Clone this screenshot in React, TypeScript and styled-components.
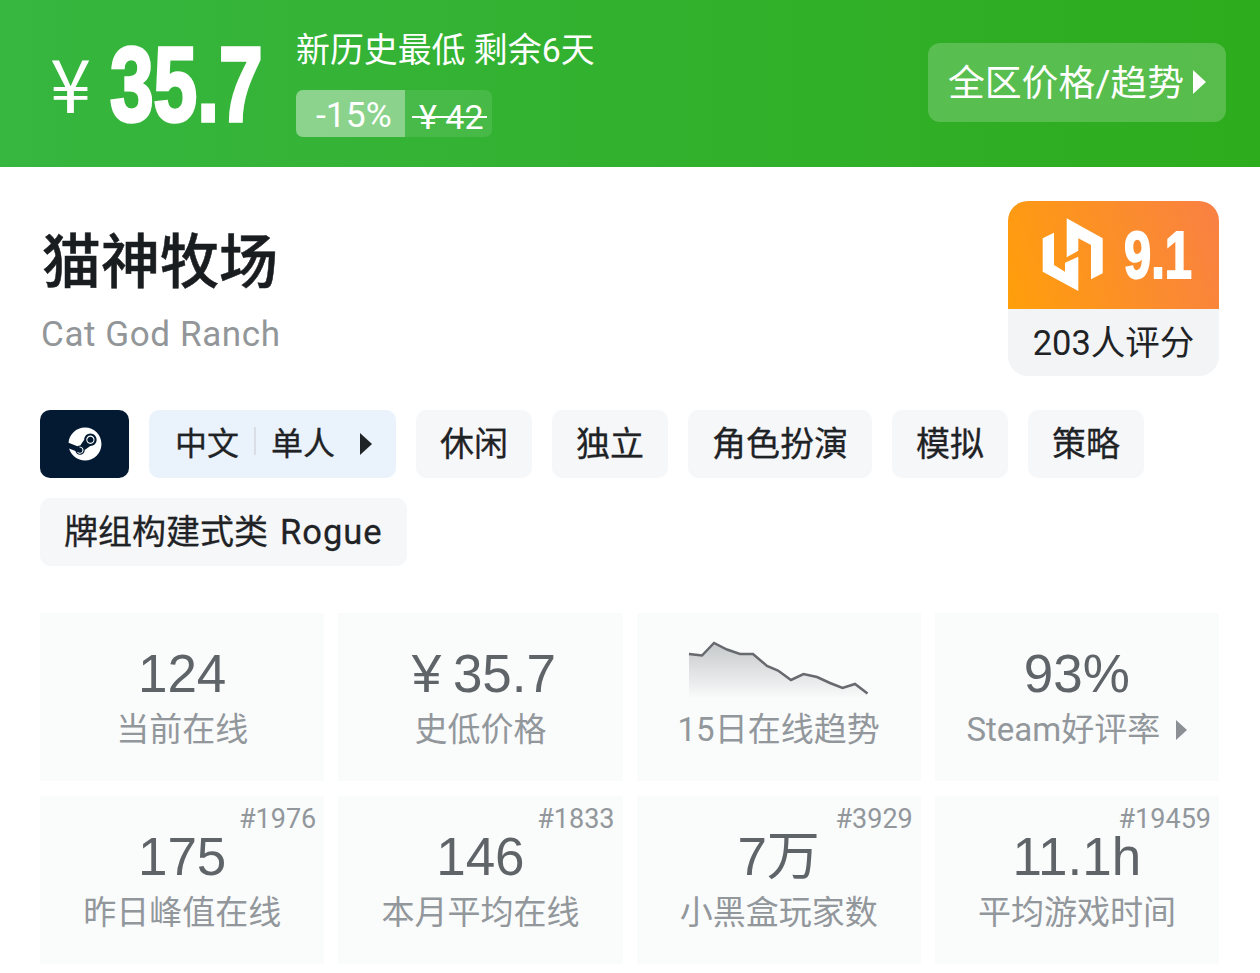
import * as React from 'react';
import styled, { createGlobalStyle } from 'styled-components';
import { FaSteam } from 'react-icons/fa';

const GlobalStyle = createGlobalStyle`
  html, body {
    margin: 0;
    padding: 0;
    background: #fff;
    overflow: hidden;
  }
  * {
    box-sizing: border-box;
  }
`;

const sans = `Roboto, "Noto Sans CJK SC", sans-serif`;

const Page = styled.div`
  width: 1260px;
  height: 973px;
  font-family: ${sans};
  overflow: hidden;
`;

const PriceBar = styled.div`
  height: 167px;
  display: flex;
  align-items: center;
  padding: 0 34px 0 50px;
  background: linear-gradient(90deg, #37b640, #2dac1d);
  color: #fff;
`;

const Yen = styled.span`
  font-size: 74px;
  line-height: 1;
  font-family: "Noto Sans CJK SC", sans-serif;
  width: 60px;
  padding-bottom: 6px;
`;

const PriceValue = styled.span`
  display: block;
  width: 186px;
  font-family: "Liberation Sans", sans-serif;
  font-weight: 700;
  font-size: 106px;
  line-height: 1;
  -webkit-text-stroke: 3.5px #fff;
  transform: scaleX(0.74);
  transform-origin: left center;
  white-space: nowrap;
`;

const PriceInfo = styled.div`
  display: flex;
  flex-direction: column;
  gap: 19px;
  flex: 1;
`;

const PriceNote = styled.div`
  font-size: 33.9px;
  line-height: 40px;
`;

const Discount = styled.div`
  display: flex;
  width: 196px;
  height: 47px;
  border-radius: 7px;
  overflow: hidden;
  background: rgba(255, 255, 255, 0.1);
`;

const DiscountRate = styled.span`
  width: 109px;
  padding-left: 20px;
  font-size: 35.5px;
  line-height: 50px;
  background: rgba(255, 255, 255, 0.37);
`;

const OldPrice = styled.span`
  padding-left: 14px;
  font-size: 34px;
  line-height: 54px;
  position: relative;
  &::after {
    content: '';
    position: absolute;
    left: 7px;
    right: -3px;
    top: 26px;
    height: 2px;
    background: #fff;
  }
`;

const RegionButton = styled.div`
  width: 298px;
  height: 79px;
  margin-bottom: 2px;
  border-radius: 12px;
  background: rgba(255, 255, 255, 0.2);
  display: flex;
  align-items: center;
  padding: 0 0 6px 20px;
  gap: 9px;
  font-size: 36.8px;
`;

const Arrow = styled.i<{ $w: number; $h: number; $color: string; $gap?: number; $drop?: number }>`
  display: block;
  flex: none;
  width: 0;
  height: 0;
  margin-left: ${(p) => p.$gap || 0}px;
  margin-top: ${(p) => p.$drop || 0}px;
  border-style: solid;
  border-width: ${(p) => p.$h / 2}px 0 ${(p) => p.$h / 2}px ${(p) => p.$w}px;
  border-color: transparent transparent transparent ${(p) => p.$color};
`;

const Main = styled.div`
  padding: 34px 41px 0 40px;
`;

const TitleRow = styled.div`
  display: flex;
  justify-content: space-between;
`;

const TitleBlock = styled.div`
  padding: 27px 0 0 2px;
`;

const Title = styled.h1`
  margin: 0;
  font-size: 59px;
  line-height: 70px;
  font-weight: 500;
  -webkit-text-stroke: 0.5px #1a1d20;
  color: #1a1d20;
`;

const Subtitle = styled.div`
  margin: 16px 0 0 -1px;
  font-size: 35px;
  line-height: 42px;
  letter-spacing: 0.6px;
  color: #929699;
`;

const ScoreCard = styled.div`
  width: 211px;
  height: 175px;
  border-radius: 20px;
  overflow: hidden;
  background: #f3f4f6;
`;

const ScoreTop = styled.div`
  height: 108px;
  display: flex;
  align-items: center;
  padding-left: 34px;
  gap: 20px;
  background: linear-gradient(70deg, #ff9f0a, #f98044);
  color: #fff;
`;

const ScoreValue = styled.span`
  display: block;
  width: 66px;
  font-family: "Liberation Sans", sans-serif;
  font-weight: 700;
  font-size: 66px;
  line-height: 1;
  -webkit-text-stroke: 2px #fff;
  transform: scaleX(0.74);
  transform-origin: left center;
  white-space: nowrap;
`;

const ScoreCount = styled.div`
  text-align: center;
  font-size: 34.5px;
  line-height: 69px;
  color: #1f2326;
`;

const TagList = styled.div`
  display: flex;
  flex-wrap: wrap;
  gap: 20px;
  margin-top: 34px;
`;

const Tag = styled.div`
  height: 68px;
  padding: 0 24px 6px;
  display: flex;
  align-items: center;
  border-radius: 10px;
  background: #f6f7f9;
  font-size: 34px;
  -webkit-text-stroke: 0.3px #1f2326;
  color: #1f2326;
  white-space: pre;
`;

const SteamTag = styled(Tag)`
  width: 89px;
  padding: 0;
  justify-content: center;
  background: #041a33;
  color: #fff;
  -webkit-text-stroke: 0;
`;

const LangTag = styled(Tag)`
  width: 247px;
  padding: 0 0 6px 26px;
  font-size: 32px;
  background: #eaf3fc;
`;

const Divider = styled.span`
  width: 2px;
  height: 28px;
  margin: 0 15px;
  background: #d9dfe5;
`;

const LatinWord = styled.span`
  margin: 5px 0 0 12px;
  font-size: 34.5px;
  letter-spacing: 1px;
`;

const StatGrid = styled.div`
  display: grid;
  grid-template-columns: repeat(4, 1fr);
  grid-auto-rows: 168px;
  gap: 15px 14px;
  margin-top: 47px;
`;

const StatCard = styled.div`
  position: relative;
  display: flex;
  flex-direction: column;
  align-items: center;
  padding-top: 30px;
  background: #fafbfb;
`;

const StatValue = styled.div<{ $nudge?: number }>`
  padding-left: ${(p) => p.$nudge || 0}px;
  font-family: "Liberation Sans", "Noto Sans CJK SC", sans-serif;
  font-size: 53px;
  line-height: 62px;
  word-spacing: -3px;
  color: #5f6469;
`;

const StatLabel = styled.div`
  display: flex;
  align-items: center;
  margin-top: 2px;
  font-size: 33px;
  line-height: 46px;
  color: #92979c;
`;

const Rank = styled.span`
  position: absolute;
  top: 5px;
  right: 8px;
  font-size: 27px;
  line-height: 36px;
  color: #92979c;
`;

const TrendChart = styled.svg`
  display: block;
  margin: -2px 0 6px;
`;

const trend = '1,13 14,14.5 26,2 39,8.5 52,13 65,13 79,25 90,29.5 103,39 115.5,33 129,36 142,42 154.5,47 167,43 179.5,52.5';

const stats = [
  { value: '175', label: '昨日峰值在线', rank: '#1976' },
  { value: '146', label: '本月平均在线', rank: '#1833' },
  { value: '7万', label: '小黑盒玩家数', rank: '#3929' },
  { value: '11.1h', label: '平均游戏时间', rank: '#19459' },
];

const tags = ['休闲', '独立', '角色扮演', '模拟', '策略'];

export default function App() {
  return (
    <Page>
      <GlobalStyle />
      <PriceBar>
        <Yen>¥</Yen>
        <PriceValue>35.7</PriceValue>
        <PriceInfo>
          <PriceNote>新历史最低 剩余6天</PriceNote>
          <Discount>
            <DiscountRate>-15%</DiscountRate>
            <OldPrice>¥ 42</OldPrice>
          </Discount>
        </PriceInfo>
        <RegionButton>
          全区价格/趋势
          <Arrow $w={13} $h={25} $color="#fff" $drop={4} />
        </RegionButton>
      </PriceBar>
      <Main>
        <TitleRow>
          <TitleBlock>
            <Title>猫神牧场</Title>
            <Subtitle>Cat God Ranch</Subtitle>
          </TitleBlock>
          <ScoreCard>
            <ScoreTop>
              <svg width="62" height="76" viewBox="0 0 62 76">
                <path fill="#fff" d="M24.7 1.3 L60.7 21.3 V56.3 L49 62.3 V28 L36.3 21.3 V33.7 L24.7 40.3 Z" />
                <path fill="#fff" d="M0.7 21.3 L12 15.7 V48 L23 54.7 V45.7 L36.3 39.7 V74 L0.7 54.7 Z" />
              </svg>
              <ScoreValue>9.1</ScoreValue>
            </ScoreTop>
            <ScoreCount>203人评分</ScoreCount>
          </ScoreCard>
        </TitleRow>
        <TagList>
          <SteamTag>
            <FaSteam size={34} />
          </SteamTag>
          <LangTag>
            中文
            <Divider />
            单人
            <Arrow $w={12} $h={22} $color="#1f2326" $gap={25} $drop={6} />
          </LangTag>
          {tags.map((t) => (
            <Tag key={t}>{t}</Tag>
          ))}
          <Tag>
            牌组构建式类
            <LatinWord>Rogue</LatinWord>
          </Tag>
        </TagList>
        <StatGrid>
          <StatCard>
            <StatValue>124</StatValue>
            <StatLabel>当前在线</StatLabel>
          </StatCard>
          <StatCard>
            <StatValue $nudge={7}>¥ 35.7</StatValue>
            <StatLabel>史低价格</StatLabel>
          </StatCard>
          <StatCard>
            <TrendChart width="182" height="58" viewBox="0 0 182 58">
              <defs>
                <linearGradient id="trendFill" x1="0" y1="0" x2="0" y2="1">
                  <stop offset="0" stopColor="#c6c9cb" />
                  <stop offset="1" stopColor="#f8f9f9" />
                </linearGradient>
              </defs>
              <polygon points={`${trend} 179.5,56 1,56`} fill="url(#trendFill)" />
              <polyline points={trend} fill="none" stroke="#66696d" strokeWidth="2.5" />
            </TrendChart>
            <StatLabel>15日在线趋势</StatLabel>
          </StatCard>
          <StatCard>
            <StatValue>93%</StatValue>
            <StatLabel>
              Steam好评率
              <Arrow $w={11} $h={20} $color="#8b9095" $gap={16} />
            </StatLabel>
          </StatCard>
          {stats.map((s) => (
            <StatCard key={s.rank}>
              <Rank>{s.rank}</Rank>
              <StatValue>{s.value}</StatValue>
              <StatLabel>{s.label}</StatLabel>
            </StatCard>
          ))}
        </StatGrid>
      </Main>
    </Page>
  );
}
